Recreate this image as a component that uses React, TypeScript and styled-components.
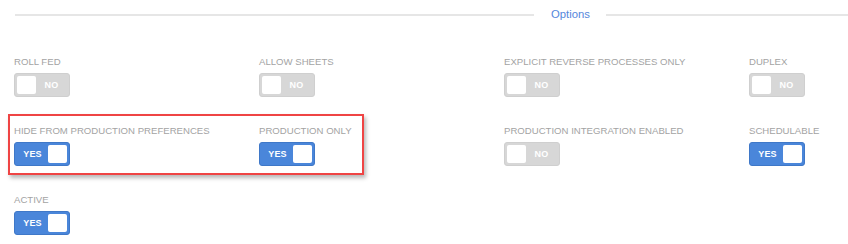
import styled, { createGlobalStyle } from "styled-components";

const GlobalStyle = createGlobalStyle`
  html, body {
    margin: 0;
    padding: 0;
    background: #ffffff;
    font-family: "Liberation Sans", Arial, sans-serif;
  }
`;

const Page = styled.div`
  position: relative;
  width: 848px;
  height: 244px;
  overflow: hidden;
  background: #fff;
`;

const Legend = styled.div`
  display: flex;
  align-items: center;
  height: 28px;
  padding-left: 15px;
`;

const Rule = styled.div<{ $width?: number }>`
  height: 2px;
  margin-top: 2px;
  background: #e6e6e6;
  flex: ${({ $width }) => ($width ? `0 0 ${$width}px` : "1 1 auto")};
`;

const LegendText = styled.span`
  padding: 0 16px 0 17px;
  font-size: 11.3px;
  color: #5588dc;
  line-height: 14px;
`;

const Grid = styled.div`
  display: grid;
  grid-template-columns: repeat(4, 245px);
  grid-auto-rows: 69px;
  padding: 28px 0 0 14px;
`;

const Field = styled.div`
  display: flex;
  flex-direction: column;
  align-items: flex-start;
  gap: 5px;
`;

const Label = styled.div`
  font-size: 9.6px;
  line-height: 12px;
  color: #a3a3a3;
  white-space: nowrap;
`;

const Toggle = styled.div<{ $on: boolean }>`
  box-sizing: border-box;
  width: 56px;
  height: 24px;
  border-radius: 3px;
  padding: 2px;
  display: flex;
  align-items: stretch;
  flex-direction: ${({ $on }) => ($on ? "row" : "row-reverse")};
  background: ${({ $on }) => ($on ? "#4a86da" : "#d7d7d7")};
  border: 1px solid ${({ $on }) => ($on ? "#3f78c8" : "#cfcfcf")};
`;

const ToggleText = styled.span`
  flex: 1;
  display: flex;
  align-items: center;
  justify-content: center;
  font-size: 9px;
  font-weight: bold;
  color: #ffffff;
  letter-spacing: 0.2px;
`;

const Knob = styled.span`
  width: 19px;
  background: #ffffff;
  border-radius: 2px;
`;

const Highlight = styled.div`
  position: absolute;
  left: 8px;
  top: 114px;
  width: 356px;
  height: 61px;
  box-sizing: border-box;
  border: 2px solid #ef4444;
  box-shadow: 2px 3px 4px rgba(0, 0, 0, 0.28);
  pointer-events: none;
`;

const fields: { label: string; on: boolean }[] = [
  { label: "ROLL FED", on: false },
  { label: "ALLOW SHEETS", on: false },
  { label: "EXPLICIT REVERSE PROCESSES ONLY", on: false },
  { label: "DUPLEX", on: false },
  { label: "HIDE FROM PRODUCTION PREFERENCES", on: true },
  { label: "PRODUCTION ONLY", on: true },
  { label: "PRODUCTION INTEGRATION ENABLED", on: false },
  { label: "SCHEDULABLE", on: true },
  { label: "ACTIVE", on: true },
];

const App = () => {
  return (
    <>
      <GlobalStyle />
      <Page>
        <Legend>
          <Rule $width={519} />
          <LegendText>Options</LegendText>
          <Rule />
        </Legend>
        <Grid>
          {fields.map((f) => (
            <Field key={f.label}>
              <Label>{f.label}</Label>
              <Toggle $on={f.on}>
                <ToggleText>{f.on ? "YES" : "NO"}</ToggleText>
                <Knob />
              </Toggle>
            </Field>
          ))}
        </Grid>
        <Highlight />
      </Page>
    </>
  );
};

export default App;
